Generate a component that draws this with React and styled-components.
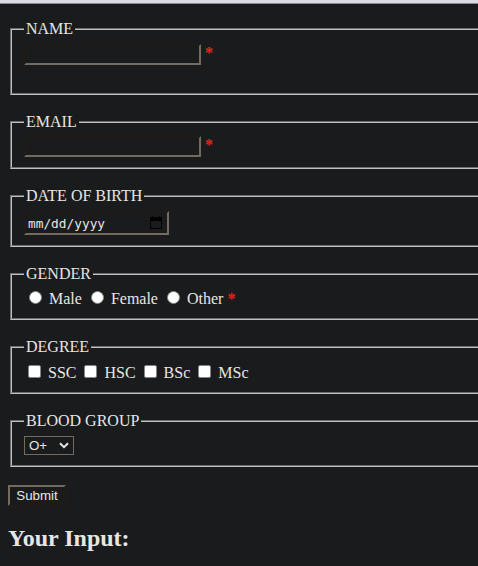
import React from "react";
import styled, { createGlobalStyle } from "styled-components";

const GlobalStyle = createGlobalStyle`
  html, body { height: 100%; overflow: hidden; }
  body {
    margin: 0;
    background: #191b1c;
    color: #e8e6e3;
    font: 16px/18px "Liberation Serif", "Times New Roman", serif;
  }
`;

const TopEdge = styled.div`
  height: 3px;
  background: #dadce3;
  border-bottom: 1px solid #85878a;
`;

const Page = styled.form`
  padding: 16px 0 0 8px;
`;

const Group = styled.fieldset`
  box-sizing: border-box;
  height: ${(p) => p.$height}px;
  margin: 0 0 18px 2px;
  padding: 0 12px;
  border: 2px groove #c0c0c0;
  border-right: 0;
`;

const Legend = styled.legend`
  height: 18px;
  padding: 0 2px;
`;

const Row = styled.div`
  display: flex;
  align-items: flex-start;
  padding-top: ${(p) => p.$top}px;
`;

const TextInput = styled.input`
  box-sizing: border-box;
  width: 177px;
  height: 21px;
  padding: 1px 2px;
  border: 2px solid;
  border-color: #1f1b17 #736b5e #736b5e #1f1b17;
  background: transparent;
  color: inherit;
  outline: 0;
`;

const DateField = styled.div`
  box-sizing: border-box;
  display: flex;
  justify-content: space-between;
  width: 145px;
  height: 24px;
  padding: 2px 5px 0 2px;
  border: 2px solid;
  border-color: #1f1b17 #736b5e #736b5e #1f1b17;
  font: 12.8px/17px "DejaVu Sans Mono", monospace;
`;

const CalendarIcon = styled.svg`
  width: 12px;
  height: 14px;
  margin-top: 1px;
`;

const Required = styled.span`
  margin-left: ${(p) => p.$gap}px;
  color: #ff1a1a;
  font-weight: bold;
`;

const Option = styled.label`
  display: flex;
  align-items: flex-start;
  margin-right: 4px;
  white-space: pre;
`;

const Choice = styled.input`
  appearance: none;
  box-sizing: border-box;
  width: 13px;
  height: 13px;
  margin: ${(p) => (p.type === "radio" ? "1px 7px 0 5px" : "1px 7px 0 4px")};
  border: 1px solid #858585;
  border-radius: ${(p) => (p.type === "radio" ? "50%" : "2px")};
  background: #fff;
`;

const SelectBox = styled.div`
  box-sizing: border-box;
  display: flex;
  justify-content: space-between;
  width: 50px;
  height: 19px;
  padding: 0 4px;
  border: 1px solid #736b5e;
  font: 13.333px/17px "Liberation Sans", Arial, sans-serif;
`;

const Chevron = styled.svg`
  width: 10px;
  height: 7px;
  margin-top: 5px;
`;

const Submit = styled.button`
  display: block;
  box-sizing: border-box;
  width: 58px;
  height: 21px;
  padding: 0;
  border: 2px solid;
  border-color: #736b5e #1f1b17 #1f1b17 #736b5e;
  background: transparent;
  color: inherit;
  font: 13.333px/15px "Liberation Sans", Arial, sans-serif;
`;

const Heading = styled.h2`
  margin: 18px 0 0;
  font-size: 24px;
  line-height: 28px;
`;

function Choices({ type, name, labels }) {
  return labels.map((label) => (
    <Option key={label}>
      <Choice type={type} name={name} />
      {label}
    </Option>
  ));
}

export default function App() {
  return (
    <>
      <GlobalStyle />
      <TopEdge />
      <Page>
        <Group $height={75}>
          <Legend>NAME</Legend>
          <Row $top={6}>
            <TextInput type="text" />
            <Required $gap={4}>*</Required>
          </Row>
        </Group>
        <Group $height={56}>
          <Legend>EMAIL</Legend>
          <Row $top={5}>
            <TextInput type="text" />
            <Required $gap={4}>*</Required>
          </Row>
        </Group>
        <Group $height={60}>
          <Legend>DATE OF BIRTH</Legend>
          <Row $top={6}>
            <DateField>
              mm/dd/yyyy
              <CalendarIcon viewBox="0 0 12 14">
                <path d="M0 1H2V0H3V1H9V0H10V1H12V13H0ZM1 5V12H11V5Z" fill="#000" fillRule="evenodd" />
              </CalendarIcon>
            </DateField>
          </Row>
        </Group>
        <Group $height={55}>
          <Legend>GENDER</Legend>
          <Row $top={7}>
            <Choices type="radio" name="gender" labels={["Male", "Female", "Other"]} />
            <Required $gap={0}>*</Required>
          </Row>
        </Group>
        <Group $height={56}>
          <Legend>DEGREE</Legend>
          <Row $top={8}>
            <Choices type="checkbox" name="degree" labels={["SSC", "HSC", "BSc", "MSc"]} />
          </Row>
        </Group>
        <Group $height={55}>
          <Legend>BLOOD GROUP</Legend>
          <Row $top={6}>
            <SelectBox>
              O+
              <Chevron viewBox="0 0 10 7">
                <path d="M1 1.2L5 5.2L9 1.2" fill="none" stroke="#e8e6e3" strokeWidth="2" />
              </Chevron>
            </SelectBox>
          </Row>
        </Group>
        <Submit type="button">Submit</Submit>
        <Heading>Your Input:</Heading>
      </Page>
    </>
  );
}
